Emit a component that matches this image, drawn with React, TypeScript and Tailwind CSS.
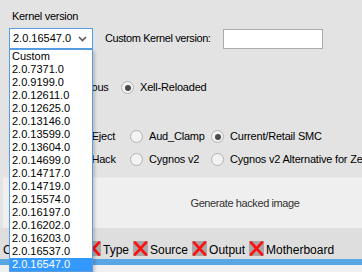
import React from "react";

const versions = [
  "Custom",
  "2.0.7371.0",
  "2.0.9199.0",
  "2.0.12611.0",
  "2.0.12625.0",
  "2.0.13146.0",
  "2.0.13599.0",
  "2.0.13604.0",
  "2.0.14699.0",
  "2.0.14717.0",
  "2.0.14719.0",
  "2.0.15574.0",
  "2.0.16197.0",
  "2.0.16202.0",
  "2.0.16203.0",
  "2.0.16537.0",
  "2.0.16547.0",
];

function Radio({ checked = false }: { checked?: boolean }) {
  return (
    <div className="w-[13px] h-[13px] shrink-0 rounded-full border border-[#b3b3b3] bg-[#f2f2f2] flex items-center justify-center">
      {checked && <div className="w-[6px] h-[6px] rounded-full bg-[#4a4a4a]" />}
    </div>
  );
}

function Option({ label, checked = false, className = "" }: { label: string; checked?: boolean; className?: string }) {
  return (
    <div className={`flex items-center gap-[6px] shrink-0 ${className}`}>
      <Radio checked={checked} />
      <span className="whitespace-nowrap tracking-[-0.2px]">{label}</span>
    </div>
  );
}

function FailIcon() {
  return (
    <svg width="15" height="15" viewBox="0 0 15 15" className="shrink-0">
      <rect x="0" y="0" width="15" height="15" fill="#a8a8a8" />
      <path d="M2 1.5 L13 13.5 M13 1.5 L2 13.5" stroke="#ff1010" strokeWidth="2.6" strokeLinecap="round" />
    </svg>
  );
}

function Check({ label }: { label: string }) {
  return (
    <div className="flex items-start gap-[2px] mr-[4px] shrink-0">
      <FailIcon />
      <span className="mt-[2px] leading-[14px] whitespace-nowrap">{label}</span>
    </div>
  );
}

export default function App() {
  return (
    <div className="relative w-[362px] h-[272px] overflow-hidden bg-[#e3e3e3] text-[11px] leading-[13px] text-black font-['Liberation_Sans',Arial,sans-serif]">
      <div className="flex flex-col">
        <div className="pt-[10px] pl-[12px] h-[23px] tracking-[-0.3px]">Kernel version</div>

        <div className="mt-[5px] flex items-center h-[21px]">
          <div className="ml-[9px] w-[84px] h-[21px] border border-[#569de5] bg-white flex items-center justify-between pl-[3px] pr-[5px] shrink-0">
            <span>2.0.16547.0</span>
            <svg width="9" height="6" viewBox="0 0 9 6">
              <path d="M1 1 L4.5 4.5 L8 1" fill="none" stroke="#5a5a5a" strokeWidth="1.6" />
            </svg>
          </div>
          <span className="ml-[12px] tracking-[-0.4px] whitespace-nowrap">Custom Kernel version:</span>
          <div className="ml-[12px] w-[100px] h-[20px] border border-[#ababab] bg-white shrink-0" />
        </div>

        <div className="mt-[32px] flex items-center h-[13px]">
          <Option className="ml-[36px] w-[85px]" label="Continuous" />
          <Option label="Xell-Reloaded" checked />
        </div>

        <div className="mt-[36px] flex items-center h-[13px] pl-[49px]">
          <Option className="w-[81px]" label="Tray Eject" />
          <Option className="w-[81px]" label="Aud_Clamp" />
          <Option label="Current/Retail SMC" checked />
        </div>

        <div className="mt-[10px] flex items-center h-[13px] pl-[49px]">
          <Option className="w-[81px]" label="Fast Hack" />
          <Option className="w-[81px]" label="Cygnos v2" />
          <Option label="Cygnos v2 Alternative for Zephyr" />
        </div>

        <div className="mt-[11px] ml-[3px] w-[484px] h-[51px] shrink-0 bg-[#efefef] border-t border-[#e9e9e9] flex items-center justify-center text-[#333] tracking-[-0.4px]">
          Generate hacked image
        </div>

        <div className="h-[31px] bg-[#dedede] flex items-start pt-[13px] pl-[3px] text-[12px]">
          <span className="w-[83px] mt-[2px] leading-[14px] shrink-0">Checklist:</span>
          <Check label="Type" />
          <Check label="Source" />
          <Check label="Output" />
          <Check label="Motherboard" />
        </div>

        <div className="h-[6px] bg-[#5aa5e4]" />
        <div className="h-[7px] bg-[#f0f0f0]" />
      </div>

      <div className="absolute left-[9px] top-[49px] w-[84px] border border-[#5b9be0] bg-white shadow-[2px_2px_3px_rgba(0,0,0,0.18)]">
        {versions.map((v, i) => (
          <div
            key={v}
            className={
              i === versions.length - 1
                ? "h-[13px] pl-[2px] bg-[#3399ff] text-white"
                : "h-[13px] pl-[2px]"
            }
          >
            {v}
          </div>
        ))}
      </div>
    </div>
  );
}
